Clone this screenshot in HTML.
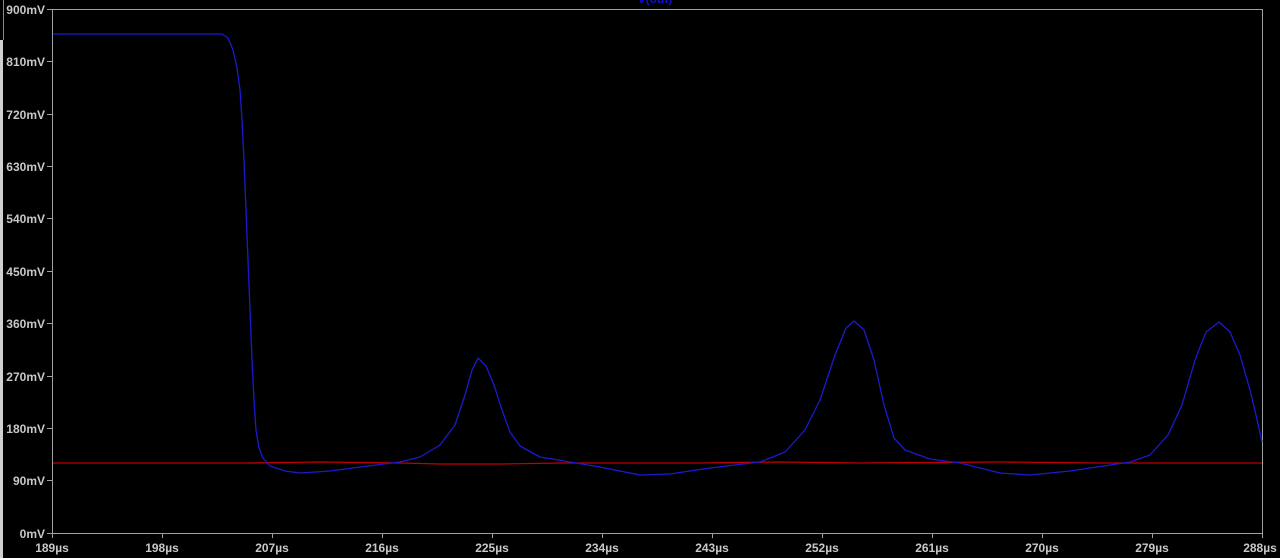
<!DOCTYPE html>
<html><head><style>
html,body{margin:0;padding:0;background:#000;width:1280px;height:558px;overflow:hidden}
svg{display:block}
text{font-family:"Liberation Sans",sans-serif;font-size:12px;font-weight:bold;fill:#c8c8c8}
</style></head><body>
<svg width="1280" height="558" viewBox="0 0 1280 558">
<rect width="1280" height="558" fill="#000"/>
<rect x="0" y="40" width="3" height="518" fill="#d0d0d0"/>
<line x1="3.5" y1="0" x2="3.5" y2="40" stroke="#888"/>
<text x="655" y="3" fill="#1010d0" style="fill:#1010d0" text-anchor="middle">V(out)</text>
<rect x="52.5" y="9.5" width="1210" height="524" fill="none" stroke="#a0a0a0" stroke-width="1"/>
<g stroke="#a0a0a0">
<line x1="47" y1="9.5" x2="52" y2="9.5"/><line x1="47" y1="61.5" x2="52" y2="61.5"/>
<line x1="47" y1="114.5" x2="52" y2="114.5"/><line x1="47" y1="166.5" x2="52" y2="166.5"/>
<line x1="47" y1="218.5" x2="52" y2="218.5"/><line x1="47" y1="271.5" x2="52" y2="271.5"/>
<line x1="47" y1="323.5" x2="52" y2="323.5"/><line x1="47" y1="376.5" x2="52" y2="376.5"/>
<line x1="47" y1="428.5" x2="52" y2="428.5"/><line x1="47" y1="480.5" x2="52" y2="480.5"/>
<line x1="47" y1="533.5" x2="52" y2="533.5"/>
<line x1="52.5" y1="533" x2="52.5" y2="538"/><line x1="162.5" y1="533" x2="162.5" y2="538"/>
<line x1="272.5" y1="533" x2="272.5" y2="538"/><line x1="382.5" y1="533" x2="382.5" y2="538"/>
<line x1="492.5" y1="533" x2="492.5" y2="538"/><line x1="602.5" y1="533" x2="602.5" y2="538"/>
<line x1="712.5" y1="533" x2="712.5" y2="538"/><line x1="822.5" y1="533" x2="822.5" y2="538"/>
<line x1="932.5" y1="533" x2="932.5" y2="538"/><line x1="1042.5" y1="533" x2="1042.5" y2="538"/>
<line x1="1152.5" y1="533" x2="1152.5" y2="538"/><line x1="1262.5" y1="533" x2="1262.5" y2="538"/>
</g>
<g text-anchor="end">
<text x="45" y="14">900mV</text><text x="45" y="66">810mV</text>
<text x="45" y="119">720mV</text><text x="45" y="171">630mV</text>
<text x="45" y="223">540mV</text><text x="45" y="276">450mV</text>
<text x="45" y="328">360mV</text><text x="45" y="381">270mV</text>
<text x="45" y="433">180mV</text><text x="45" y="485">90mV</text>
<text x="45" y="538">0mV</text>
</g>
<g text-anchor="middle">
<text x="52" y="552">189µs</text><text x="162" y="552">198µs</text>
<text x="272" y="552">207µs</text><text x="382" y="552">216µs</text>
<text x="492" y="552">225µs</text><text x="602" y="552">234µs</text>
<text x="712" y="552">243µs</text><text x="822" y="552">252µs</text>
<text x="932" y="552">261µs</text><text x="1042" y="552">270µs</text>
<text x="1152" y="552">279µs</text><text x="1260" y="552">288µs</text>
</g>
<polyline fill="none" stroke="#c00000" stroke-width="1.3" points="53,463 250,463 320,462 400,463 440,464 500,464 560,463 700,463 780,462 860,463 1000,462 1100,463 1262,463"/>
<polyline fill="none" stroke="#1a1ad0" stroke-width="1.3" stroke-linejoin="round" points="53,34 222,34 228,38 233,50 237,68 240,90 242,120 244,160 246,210 248,260 250,310 252,360 254,400 256,430 259,448 263,458 270,466 285,471 300,473 330,471 360,467 400,462 420,457 440,445 455,425 465,395 472,370 478,358 486,366 494,385 502,410 510,432 520,446 540,457 570,462 600,467 640,475 670,474 710,468 760,462 785,452 805,430 820,400 835,355 846,328 854,321 864,330 874,360 884,405 894,438 905,450 930,459 960,463 1000,473 1030,475 1070,471 1130,462 1150,455 1168,435 1182,405 1195,360 1206,332 1219,322 1230,332 1240,355 1250,390 1256,415 1262,442"/>
</svg>
</body></html>
